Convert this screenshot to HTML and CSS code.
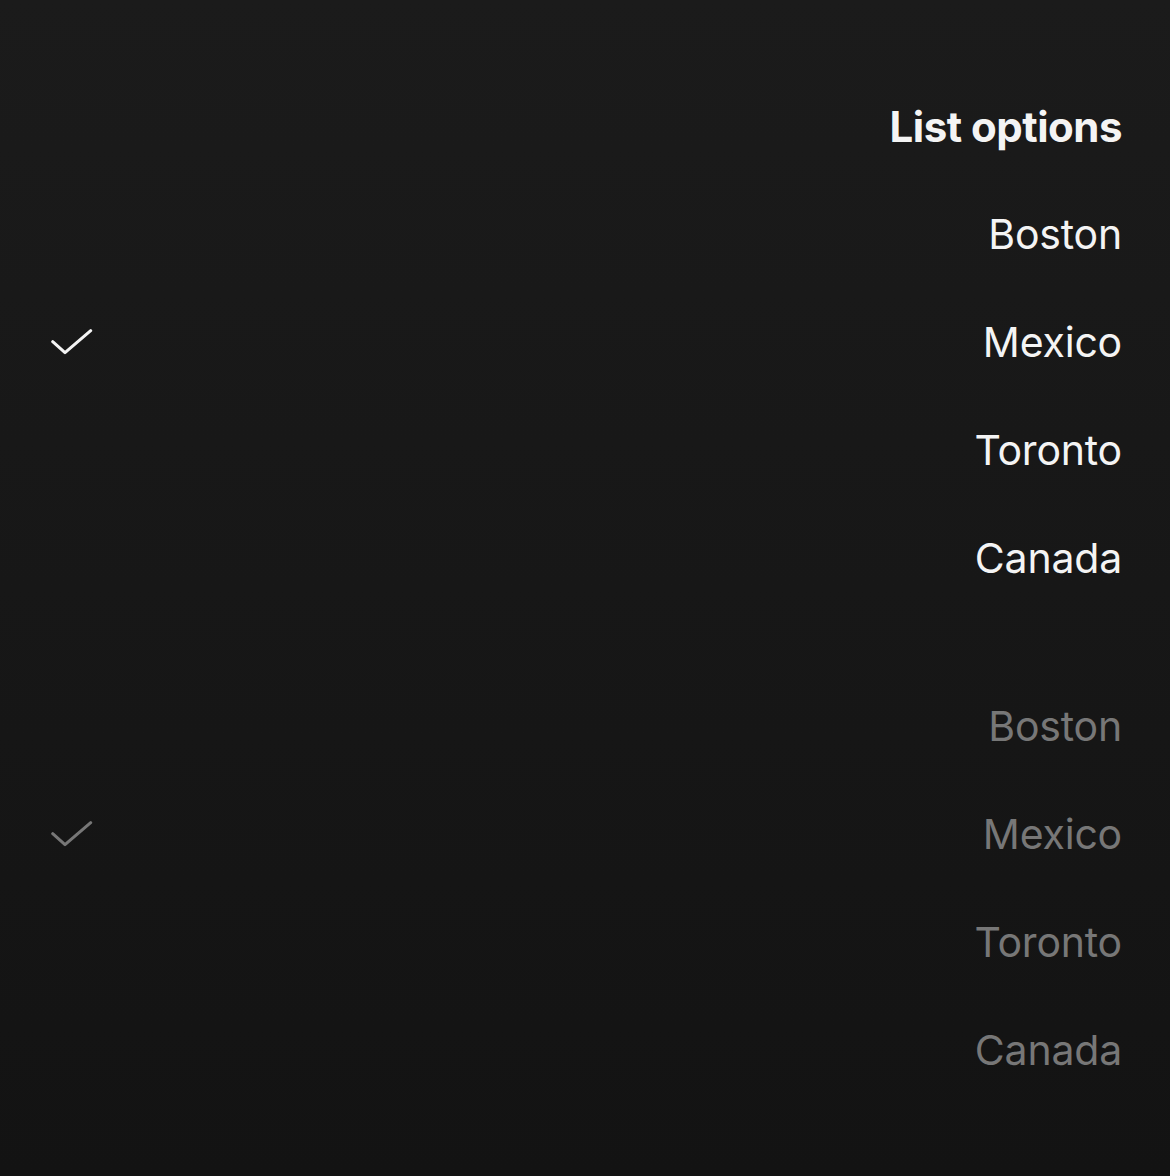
FILE: index.html
```html
<!DOCTYPE html>
<html>
<head>
<meta charset="utf-8">
<link rel="stylesheet" href="styles.css">
</head>
<body>
<main class="page">
  <section class="group">
    <div class="row"><span></span><span class="title">List options</span></div>
    <div class="row"><span class="mark"></span><span class="label">Boston</span></div>
    <div class="row"><svg class="check" width="42" height="26" viewBox="0 0 42 26"><polyline points="1.7,12.7 14,23.7 39.7,1.7" fill="none" stroke="currentColor" stroke-width="3" stroke-linecap="round" stroke-linejoin="round"/></svg><span class="label">Mexico</span></div>
    <div class="row"><span class="mark"></span><span class="label">Toronto</span></div>
    <div class="row"><span class="mark"></span><span class="label">Canada</span></div>
  </section>
  <section class="group disabled">
    <div class="row"><span class="mark"></span><span class="label">Boston</span></div>
    <div class="row"><svg class="check" width="42" height="26" viewBox="0 0 42 26"><polyline points="1.7,12.7 14,23.7 39.7,1.7" fill="none" stroke="currentColor" stroke-width="3" stroke-linecap="round" stroke-linejoin="round"/></svg><span class="label">Mexico</span></div>
    <div class="row"><span class="mark"></span><span class="label">Toronto</span></div>
    <div class="row"><span class="mark"></span><span class="label">Canada</span></div>
  </section>
</main>
</body>
</html>
```
FILE: styles.css
```css
html, body {
  margin: 0;
  padding: 0;
}
body {
  width: 1170px;
  height: 1176px;
  background: linear-gradient(to bottom, #1b1b1b 0%, #131313 100%);
  font-family: Inter, "Noto Sans", sans-serif;
  color: #f4f4f4;
}
.page {
  padding: 72px 48px 0 51px;
  display: flex;
  flex-direction: column;
  gap: 60px;
}
.group {
  display: flex;
  flex-direction: column;
}
.row {
  height: 108px;
  display: flex;
  align-items: center;
  justify-content: space-between;
}
.title {
  font-size: 42px;
  font-weight: 700;
  letter-spacing: -0.5px;
}
.label {
  font-size: 41px;
  font-weight: 400;
  letter-spacing: -0.2px;
}
.check {
  display: block;
  color: #f4f4f4;
}
.disabled .label,
.disabled .check {
  color: #777777;
}
```
